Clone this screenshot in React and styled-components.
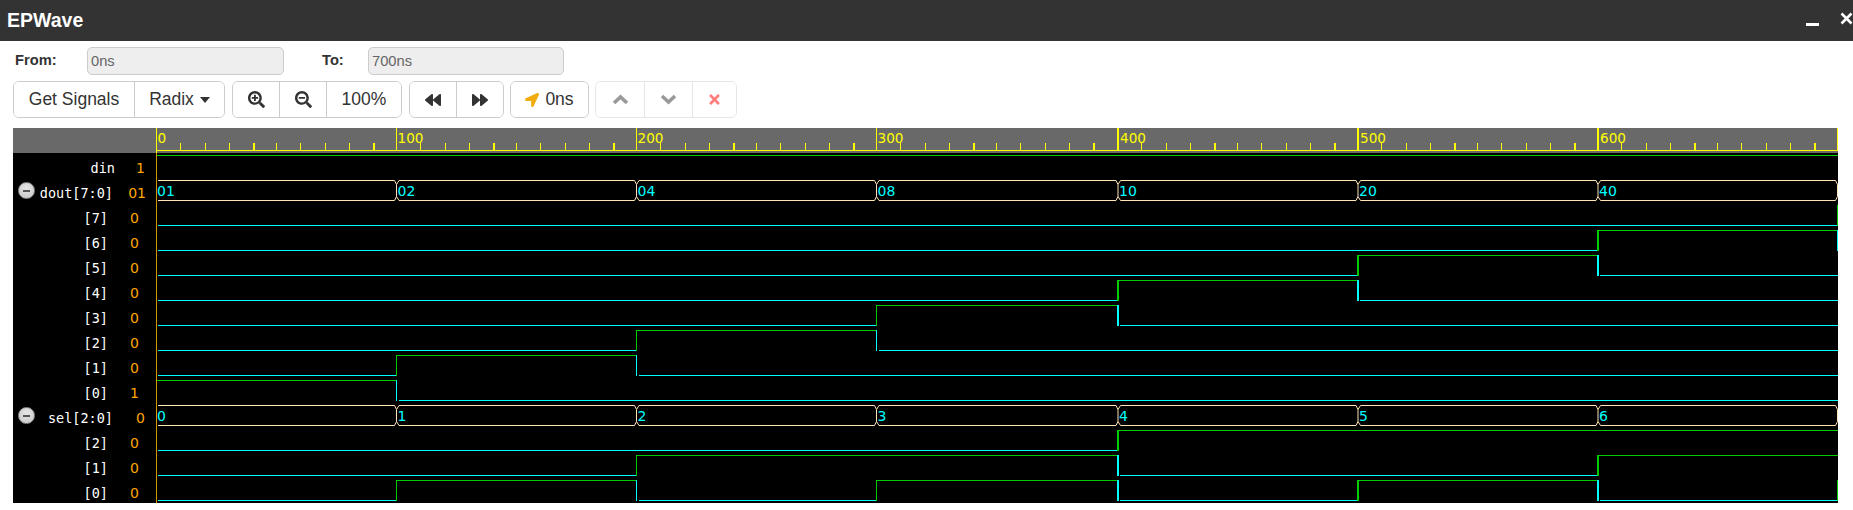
import styled, { createGlobalStyle } from "styled-components"
import { FaSearchPlus, FaSearchMinus, FaBackward, FaForward, FaLocationArrow, FaTimes } from "react-icons/fa"

const GlobalStyle = createGlobalStyle`
html, body {
  margin: 0;
  padding: 0;
  background: #fff;
  overflow: hidden;
  font-family: "Liberation Sans", Arial, sans-serif;
}
`

const Page = styled.div`
width: 1853px;
height: 510px;
display: flex;
flex-direction: column;
`
const TitleBar = styled.div`
height: 41px;
flex: none;
background: #333;
color: #fff;
display: flex;
align-items: center;
padding-left: 7px;
`
const Title = styled.div`
font-size: 19.5px;
font-weight: bold;
`
const WindowButtons = styled.div`
margin-left: auto;
display: flex;
align-items: flex-start;
gap: 21px;
height: 41px;
`
const Minimize = styled.div`
width: 13px;
height: 3px;
margin-top: 23px;
background: #fff;
`
const Close = styled.svg`
width: 13px;
height: 13px;
margin-top: 12px;
display: block;
`

const RangeRow = styled.div`
display: flex;
align-items: center;
height: 28px;
margin-top: 6px;
padding-left: 15px;
`
const RangeLabel = styled.label`
width: ${props => props.$width}px;
margin: -3px 0 0 ${props => props.$gap || 0}px;
font-size: 14.7px;
font-weight: bold;
color: #333;
`
const RangeInput = styled.input`
width: ${props => props.$width}px;
height: 28px;
box-sizing: border-box;
padding: 0 3px;
border: 1px solid #ccc;
border-radius: 5px;
background: #eee;
color: #666;
font-family: inherit;
font-size: 14.7px;
outline: none;
`

const Toolbar = styled.div`
display: flex;
height: 37px;
margin-top: 6px;
padding-left: 13px;
`
const Group = styled.div`
display: flex;
height: 37px;
box-sizing: border-box;
margin-left: ${props => props.$gap || 0}px;
border: 1px solid ${props => props.$disabled ? "#e6e6e6" : "#ccc"};
border-radius: 6px;
overflow: hidden;
`
const Button = styled.button`
width: ${props => props.$width}px;
height: 100%;
box-sizing: border-box;
display: flex;
align-items: center;
justify-content: center;
gap: 6px;
padding: 0;
border: none;
border-left: ${props => props.$first ? "none" : `1px solid ${props.$disabled ? "#e6e6e6" : "#ccc"}`};
background: #fff;
color: ${props => props.$color || "#333"};
font-family: inherit;
font-size: 17.5px;
`
const Caret = styled.span`
width: 0;
height: 0;
border-left: 5.5px solid transparent;
border-right: 5.5px solid transparent;
border-top: 6px solid #333;
`
const ChevronIcon = styled.svg`
width: 17px;
height: 11px;
display: block;
transform: ${props => props.$down ? "scaleY(-1)" : "none"};
`

const Viewer = styled.div`
width: 1825px;
height: 375px;
margin: 10px 0 0 13px;
display: flex;
flex-direction: column;
background: #000;
`
const RulerRow = styled.div`
display: flex;
height: 25px;
flex: none;
background: #696969;
`
const RulerSpacer = styled.div`
width: 143px;
flex: none;
border-right: 1px solid #ffff00;
`
const Body = styled.div`
display: flex;
height: 350px;
`
const NameColumn = styled.div`
width: 143px;
flex: none;
border-right: 1px solid #d29b00;
display: flex;
flex-direction: column;
`
const NameRow = styled.div`
height: 25px;
flex: none;
box-sizing: border-box;
display: flex;
align-items: center;
padding: 4px ${props => props.$right}px 0 5px;
`
const Toggle = styled.span`
width: 15px;
height: 15px;
flex: none;
position: relative;
border: 1px solid #8c8c8c;
border-radius: 50%;
background: radial-gradient(circle at 50% 35%, #e6e6e6, #c4c4c4);
margin-top: -4px;
&::after {
  content: "";
  position: absolute;
  left: 4px;
  top: 6.5px;
  width: 7px;
  height: 2px;
  background: #555;
}
`
const SignalName = styled.span`
margin-left: auto;
color: #fff;
font-family: "DejaVu Sans Mono", "Liberation Mono", monospace;
font-size: 13.5px;
white-space: pre;
`
const SignalValue = styled.span`
width: ${props => props.$width}px;
flex: none;
text-align: right;
color: #ffa500;
font-family: "DejaVu Sans", sans-serif;
font-size: 14px;
`
const Chart = styled.svg`
display: block;
flex: none;
`
const ChartText = styled.text`
font-family: "DejaVu Sans", sans-serif;
font-size: ${props => props.$size}px;
fill: ${props => props.$color};
`

// pixel position of each 100ns mark, measured from the left edge of the charts
const MARKS = [-1, 239, 479, 719, 960, 1200, 1440, 1680]
const TICK_OFFSETS = [24, 49, 73, 97, 120, 144, 169, 193, 217]

const EDGES = [
  { x: 239.5, w: 1 },
  { x: 479.5, w: 1 },
  { x: 719.5, w: 1 },
  { x: 961, w: 2 },
  { x: 1201, w: 2 },
  { x: 1441, w: 2 },
  { x: 1680.5, w: 1 },
]

const GREEN = "#00cc00"
const CYAN = "#00ffff"
const BUS = "#ffe4b5"
const WIDTH = 1681

const KINDS = {
  top: { right: 11, value: 30 },
  dout: { right: 10, value: 33 },
  sel: { right: 11, value: 32 },
  bit: { right: 17, value: 31 },
}

const signals = [
  { name: "din", value: "1", kind: "top", bits: "11111111" },
  { name: "dout[7:0]", value: "01", kind: "dout", toggle: true, bus: ["01", "02", "04", "08", "10", "20", "40"] },
  { name: "[7]", value: "0", kind: "bit", bits: "00000001" },
  { name: "[6]", value: "0", kind: "bit", bits: "00000010" },
  { name: "[5]", value: "0", kind: "bit", bits: "00000100" },
  { name: "[4]", value: "0", kind: "bit", bits: "00001000" },
  { name: "[3]", value: "0", kind: "bit", bits: "00010000" },
  { name: "[2]", value: "0", kind: "bit", bits: "00100000" },
  { name: "[1]", value: "0", kind: "bit", bits: "01000000" },
  { name: "[0]", value: "1", kind: "bit", bits: "10000000" },
  { name: "sel[2:0]", value: "0", kind: "sel", toggle: true, bus: ["0", "1", "2", "3", "4", "5", "6"] },
  { name: "[2]", value: "0", kind: "bit", bits: "00001111" },
  { name: "[1]", value: "0", kind: "bit", bits: "00110011" },
  { name: "[0]", value: "0", kind: "bit", bits: "01010101" },
]

const Chevron = ({ down }) => (
  <ChevronIcon $down={down} viewBox="0 0 17 11">
    <path d="M2 9 L8.5 3 L15 9" fill="none" stroke="#999" strokeWidth="3.6" />
  </ChevronIcon>
)

const Ruler = () => {
  const ticks = []
  MARKS.forEach((mark, k) => {
    const thick = k >= 4 && k < 7
    ticks.push(<rect key={`m${k}`} x={mark} y={0} width={thick ? 2 : 1} height={23} fill="#ffff00" />)
    if (k < 7) {
      ticks.push(
        <ChartText key={`t${k}`} x={mark + (thick ? 3 : 1.5)} y={15} $size={13.6} $color="#ffff00">{k * 100}</ChartText>
      )
      TICK_OFFSETS.forEach((offset, i) => {
        ticks.push(
          <rect key={`${k}-${i}`} x={mark + offset} y={15} width={i % 5 === 3 ? 2 : 1} height={8} fill="#ffff00" />
        )
      })
    }
  })
  return (
    <Chart width={WIDTH} height={25} shapeRendering="crispEdges">
      <rect x={0} y={22} width={WIDTH} height={1.4} fill="#ffff00" />
      {ticks}
    </Chart>
  )
}

const BitWave = ({ bits, row }) => {
  const high = row * 25 + 2.5
  const low = row * 25 + 22.5
  const lines = []
  let start = bits[0] === "1" ? 0 : 1
  for (let k = 0; k < 7; k++) {
    const level = bits[k]
    const next = bits[k + 1]
    if (level === next) continue
    const { x, w } = EDGES[k]
    lines.push(
      <line key={`h${k}`} x1={start} x2={x} y1={level === "1" ? high : low} y2={level === "1" ? high : low}
        stroke={level === "1" ? GREEN : CYAN} />,
      <line key={`v${k}`} x1={x} x2={x} y1={high - 0.5} y2={low + 0.5}
        stroke={next === "1" ? GREEN : CYAN} strokeWidth={w} />
    )
    start = next === "1" ? x : x + 2
  }
  const last = bits[7]
  lines.push(
    <line key="end" x1={start} x2={WIDTH} y1={last === "1" ? high : low} y2={last === "1" ? high : low}
      stroke={last === "1" ? GREEN : CYAN} />
  )
  return <g shapeRendering="crispEdges">{lines}</g>
}

const BusWave = ({ bus, row }) => {
  const top = row * 25 + 2.5
  const bottom = row * 25 + 22.5
  return (
    <g>
      {bus.map((label, k) => {
        const prev = k === 0 ? null : EDGES[k - 1].x
        const left = k === 0 ? 1 : prev + 2.5
        const mid = EDGES[k].x
        const right = mid - 2
        const opening = k === 0 ? "" : `M${prev} ${top + 4} L${left} ${top} M${prev} ${bottom - 4} L${left} ${bottom} `
        return (
          <g key={k}>
            <path
              d={`${opening}M${left} ${top} H${right} L${mid} ${top + 4} V${bottom - 4} L${right} ${bottom} H${left}`}
              fill="none" stroke={BUS}
            />
            <ChartText x={k === 0 ? 0 : prev + 1} y={row * 25 + 18} $size={14} $color={CYAN}>{label}</ChartText>
          </g>
        )
      })}
    </g>
  )
}

const App = () => {
  return (
    <Page>
      <GlobalStyle />
      <TitleBar>
        <Title>EPWave</Title>
        <WindowButtons>
          <Minimize />
          <Close viewBox="0 0 13 13">
            <path d="M1.5 1.5 L11.5 11.5 M11.5 1.5 L1.5 11.5" stroke="#fff" strokeWidth="2.6" fill="none" />
          </Close>
        </WindowButtons>
      </TitleBar>
      <RangeRow>
        <RangeLabel $width={72}>From:</RangeLabel>
        <RangeInput $width={197} readOnly value="0ns" />
        <RangeLabel $width={46} $gap={38}>To:</RangeLabel>
        <RangeInput $width={196} readOnly value="700ns" />
      </RangeRow>
      <Toolbar>
        <Group>
          <Button $first $width={120}>Get Signals</Button>
          <Button $width={90}>Radix <Caret /></Button>
        </Group>
        <Group $gap={7}>
          <Button $first $width={46}><FaSearchPlus size={17} /></Button>
          <Button $width={47}><FaSearchMinus size={17} /></Button>
          <Button $width={75}>100%</Button>
        </Group>
        <Group $gap={7}>
          <Button $first $width={46}><FaBackward size={16} /></Button>
          <Button $width={47}><FaForward size={16} /></Button>
        </Group>
        <Group $gap={6}>
          <Button $first $width={77}><FaLocationArrow size={14} color="#f0ad0e" />0ns</Button>
        </Group>
        <Group $gap={6} $disabled>
          <Button $first $disabled $width={48}><Chevron /></Button>
          <Button $disabled $width={48}><Chevron down /></Button>
          <Button $disabled $width={44} $color="#ff7f7f"><FaTimes size={15} /></Button>
        </Group>
      </Toolbar>
      <Viewer>
        <RulerRow>
          <RulerSpacer />
          <Ruler />
        </RulerRow>
        <Body>
          <NameColumn>
            {signals.map((signal, i) => (
              <NameRow key={i} $right={KINDS[signal.kind].right}>
                {signal.toggle && <Toggle />}
                <SignalName>{signal.name}</SignalName>
                <SignalValue $width={KINDS[signal.kind].value}>{signal.value}</SignalValue>
              </NameRow>
            ))}
          </NameColumn>
          <Chart width={WIDTH} height={350}>
            {signals.map((signal, i) => signal.bus
              ? <BusWave key={i} bus={signal.bus} row={i} />
              : <BitWave key={i} bits={signal.bits} row={i} />
            )}
          </Chart>
        </Body>
      </Viewer>
    </Page>
  )
}

export default App
